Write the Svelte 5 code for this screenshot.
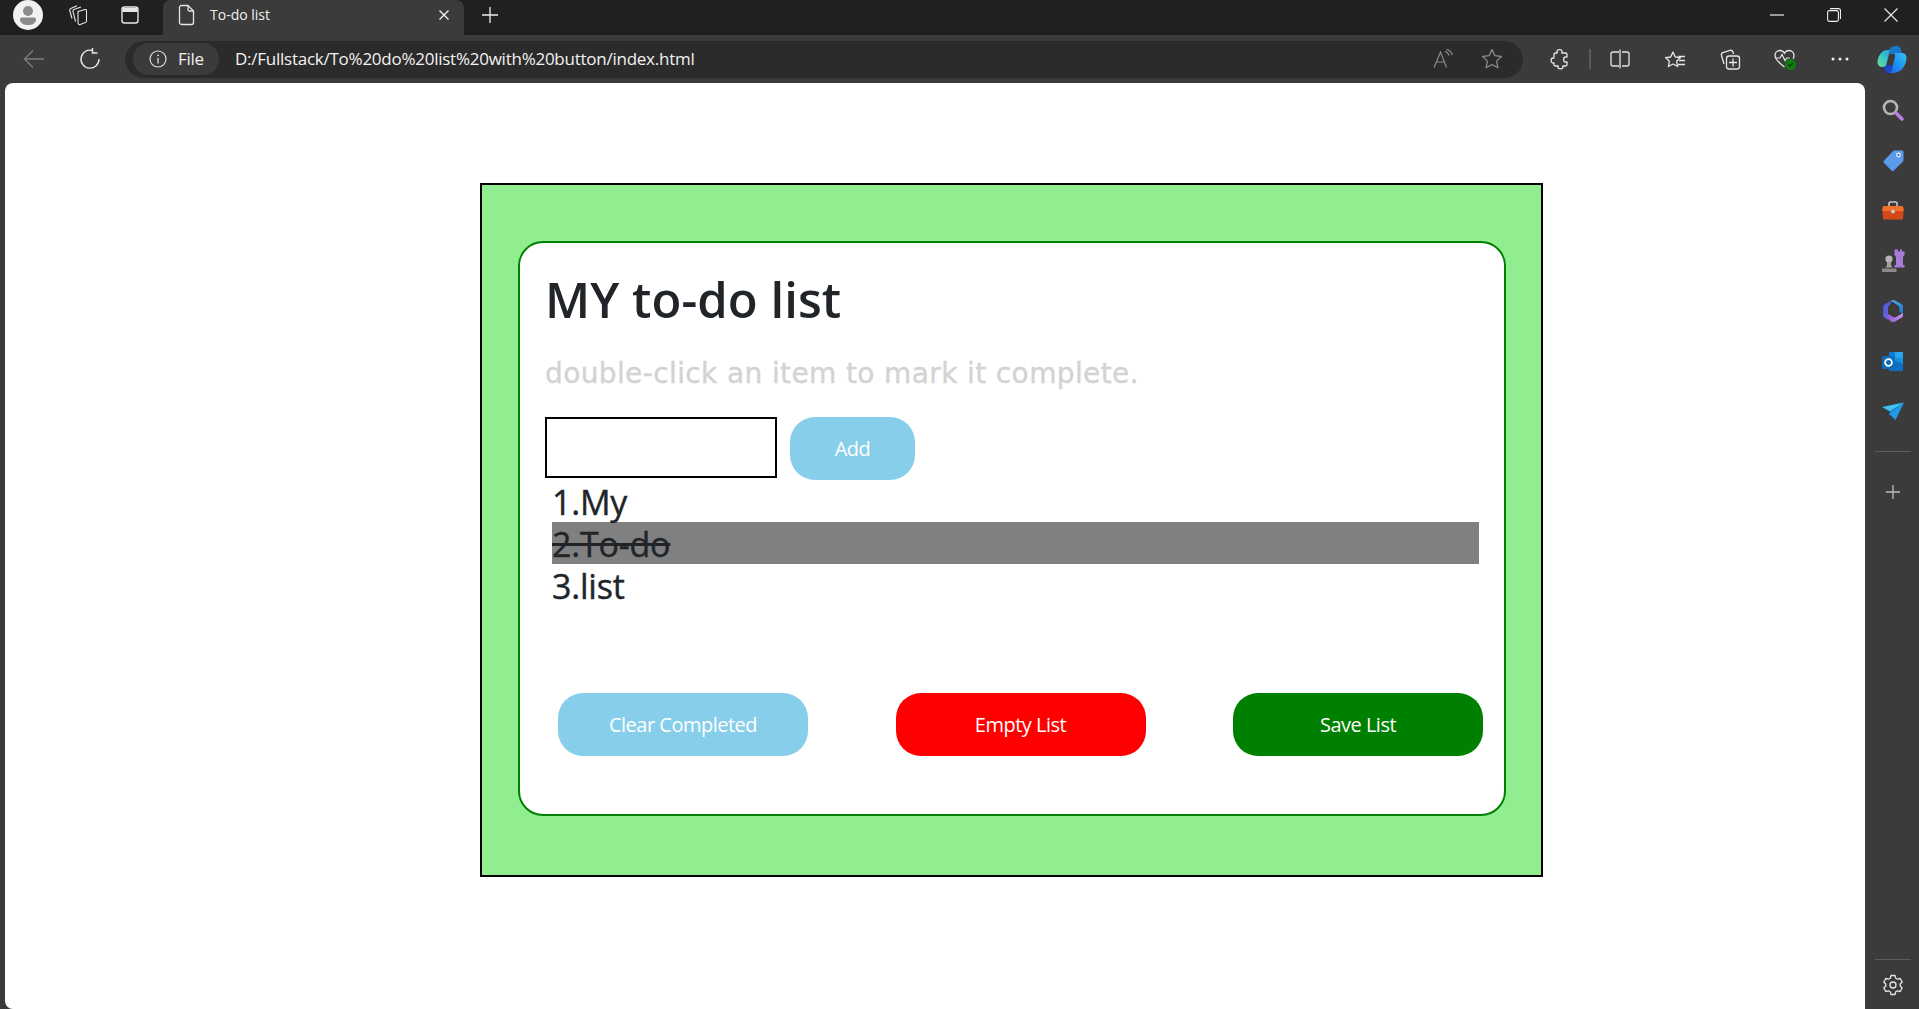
<script>
  let items = [
    { label: '1.My', done: false },
    { label: '2.To-do', done: true },
    { label: '3.list', done: false }
  ];
</script>

<div class="browser">
  <header class="tabbar">
    <div class="slot avatar-slot">
      <svg width="30" height="30" viewBox="0 0 30 30"><circle cx="15" cy="15" r="15" fill="#f2f2f2"/><circle cx="15" cy="11" r="5" fill="#8a8a8a"/><path d="M7 19.500C7 18 8 17.500 9.500 17.500h11c1.500 0 2.500.5 2.500 2 0 3.500-3.500 5.500-8 5.500s-8-2-8-5.500z" fill="#8a8a8a"/></svg>
    </div>
    <div class="slot s44">
      <svg width="22" height="22" viewBox="0 0 22 22" fill="none" stroke="#e6e6e6" stroke-width="1.100"><path d="M11 7.500l7-2c.8-.2 1.500.3 1.500 1.200v10.300c0 .8-.4 1.300-1.100 1.500l-5.200 2c-1 .3-2.200-.3-2.200-1.400z"/><path d="M8.500 17.500 6 7.500c-.2-1 .2-1.700 1-2l7-2.500"/><path d="M5 14.500 2.800 6.500c-.3-1 .2-1.700 1-2L10 1.800"/></svg>
    </div>
    <div class="slot s60">
      <svg width="20" height="20" viewBox="0 0 20 20" fill="none" stroke="#e6e6e6" stroke-width="1.400"><rect x="2" y="2" width="16" height="16" rx="2.500"/><path d="M2.500 3h15v4h-15z" fill="#e6e6e6" stroke="none"/></svg>
    </div>
    <div class="tab">
      <svg class="file" width="18" height="22" viewBox="0 0 18 22" fill="none" stroke="#e6e6e6" stroke-width="1.300"><path d="M3.500 1.500h6.500l5.500 5.500v11.500a2 2 0 0 1-2 2h-10a2 2 0 0 1-2-2v-15a2 2 0 0 1 2-2z"/><path d="M10 1.500v4a1.500 1.500 0 0 0 1.500 1.500h4"/></svg>
      <span class="tab-title">To-do list</span>
      <svg class="tab-close" width="12" height="12" viewBox="0 0 12 12" stroke="#f0f0f0" stroke-width="1.400"><path d="M1.500 1.500l9 9M10.500 1.500l-9 9"/></svg>
    </div>
    <div class="slot newtab">
      <svg width="18" height="18" viewBox="0 0 18 18" stroke="#ededed" stroke-width="1.300"><path d="M9 1v16M1 9h16"/></svg>
    </div>
    <div class="winctl">
      <div class="slot s57"><svg width="14" height="2" viewBox="0 0 14 2"><path d="M0 1h14" stroke="#eee" stroke-width="1.200"/></svg></div>
      <div class="slot s57"><svg width="14" height="14" viewBox="0 0 14 14" fill="none" stroke="#eee" stroke-width="1.100"><rect x=".6" y="2.600" width="10.800" height="10.800" rx="1.800"/><path d="M3 .6h8.500a2 2 0 0 1 2 2V11"/></svg></div>
      <div class="slot s57"><svg width="14" height="14" viewBox="0 0 14 14" stroke="#eee" stroke-width="1.100"><path d="M.5.500l13 13M13.500.500l-13 13"/></svg></div>
    </div>
  </header>

  <nav class="toolbar">
    <div class="slot s56">
      <svg width="22" height="20" viewBox="0 0 22 20" fill="none" stroke="#7d7d7d" stroke-width="1.300"><path d="M21 10H1.500M10 1.500 1.500 10l8.500 8.500"/></svg>
    </div>
    <div class="slot s56">
      <svg width="22" height="22" viewBox="0 0 22 22" fill="none" stroke="#e6e6e6" stroke-width="1.400"><path d="M13.500 2.500A9 9 0 1 0 20 11"/><path d="M13.500 .5v5h5" transform="translate(0 -.5)"/></svg>
    </div>
    <div class="address">
      <div class="pill">
        <svg width="18" height="18" viewBox="0 0 18 18" fill="none" stroke="#e6e6e6" stroke-width="1.100"><circle cx="9" cy="9" r="8"/><path d="M9 8v5.500" stroke-width="1.300"/><circle cx="9" cy="5.300" r=".9" fill="#e6e6e6" stroke="none"/></svg>
        <span>File</span>
      </div>
      <span class="url">D:/Fullstack/To%20do%20list%20with%20button/index.html</span>
      <div class="addr-icons">
        <div class="slot s49">
          <svg width="20" height="20" viewBox="0 0 20 20" fill="none" stroke="#8b8b8b" stroke-width="1.200"><path d="M1 18.500 7.500 3l6 15.500M3.300 13h8.500"/><path d="M12 2.500c2.200.5 3.500 2 4 4M13.500 .5c2.800.7 5 2.800 5.800 5.500" /></svg>
        </div>
        <div class="slot s49">
          <svg width="22" height="22" viewBox="0 0 22 22" fill="none" stroke="#8b8b8b" stroke-width="1.300" stroke-linejoin="round"><path d="M11 1.500l2.900 6.200 6.600.8-4.900 4.600 1.300 6.700L11 16.500l-5.900 3.300 1.300-6.700L1.500 8.500l6.600-.8z"/></svg>
        </div>
      </div>
    </div>
    <div class="tools">
      <div class="slot s55 first">
        <svg width="20" height="22" viewBox="0 0 20 22" fill="none" stroke="#e6e6e6" stroke-width="1.300" stroke-linejoin="round"><path d="M7 3.500C7 1 12 1 12 3.500c0 1-.5 1.500 0 1.500h3.500c1 0 1.500.5 1.500 1.500V9c0 .5-.7 0-1.500 0-2.500 0-2.500 5 0 5 .8 0 1.500-.5 1.500 0v2.500c0 1-.5 1.500-1.500 1.500H13c-.5 0 0 .5 0 1 0 2.500-5 2.500-5 0 0-.5.500-1 0-1H5.500c-1 0-1.500-.5-1.500-1.500V15c0-.5-.5 0-1 0-2.500 0-2.500-5 0-5 .5 0 1 .5 1-.0V6.500C4 5.500 4.500 5 5.500 5H7c.5 0 0-.5 0-1.500z"/></svg>
      </div>
      <div class="sep"></div>
      <div class="slot s55">
        <svg width="20" height="20" viewBox="0 0 20 20" fill="none" stroke="#e6e6e6" stroke-width="1.300"><path d="M9 3H3a2 2 0 0 0-2 2v10a2 2 0 0 0 2 2h6M12 3h5a2 2 0 0 1 2 2v10a2 2 0 0 1-2 2h-5M10 .5v19"/></svg>
      </div>
      <div class="slot s55">
        <svg width="22" height="20" viewBox="0 0 22 20" fill="none" stroke="#e6e6e6" stroke-width="1.300" stroke-linejoin="round"><path d="M9 1.500l2.300 5 5.200.6-3.900 3.600 1 5.300L9 13.500l-4.600 2.500 1-5.300L1.500 7.100l5.200-.6z" transform="translate(0 1.500)"/><path d="M14.500 7.500H21M15 11.500h6M14 15.500h7"/></svg>
      </div>
      <div class="slot s55">
        <svg width="22" height="22" viewBox="0 0 22 22" fill="none" stroke="#e6e6e6" stroke-width="1.300"><path d="M5 16 2.500 7.500C2 6 2.800 5 4 4.600l7-2.200c1.300-.4 2.500.2 3 1.600l.5 2"/><rect x="7.500" y="8" width="13" height="13" rx="2.500"/><path d="M14 10.500v8M10 14.500h8"/></svg>
      </div>
      <div class="slot s55 heart">
        <svg width="24" height="24" viewBox="0 0 24 24" fill="none"><path d="M11.500 20C7 16.500 2 13 2 8.500 2 5.500 4.300 3.500 6.800 3.500c2 0 3.700 1 4.700 2.800 1-1.800 2.700-2.800 4.700-2.800C18.700 3.500 21 5.500 21 8.500c0 1.200-.3 2.300-.8 3.300" stroke="#e6e6e6" stroke-width="1.300"/><path d="M2.500 11h4.500l2-3.500 3 6 1.800-2.500h3" stroke="#e6e6e6" stroke-width="1.200"/><circle cx="17.500" cy="17.500" r="5.500" fill="#107c10"/><path d="M15 17.500l1.800 1.800 3.200-3.400" stroke="#0c3d0c" stroke-width="1.300"/></svg>
      </div>
      <div class="slot s55">
        <svg width="18" height="4" viewBox="0 0 18 4" fill="#f0f0f0"><circle cx="2" cy="2" r="1.500"/><circle cx="9" cy="2" r="1.500"/><circle cx="16" cy="2" r="1.500"/></svg>
      </div>
      <div class="slot copilot">
        <svg width="30" height="29" viewBox="0 0 30 29">
          <defs>
            <linearGradient id="cpa" x1="0" y1="1" x2="1" y2="0"><stop offset="0" stop-color="#6fe08a"/><stop offset=".55" stop-color="#35c4c8"/><stop offset="1" stop-color="#2a9fdc"/></linearGradient>
            <linearGradient id="cpb" x1="0" y1="1" x2="1" y2="0"><stop offset="0" stop-color="#1e5fe0"/><stop offset=".5" stop-color="#1c96f2"/><stop offset="1" stop-color="#3cc0f5"/></linearGradient>
          </defs>
          <path d="M11 7C12.500 3 14.500 1 18 1h2c2 0 3.500 1.500 4 4l1 4H13z" fill="#1878c8"/>
          <path d="M9 28h2c3 0 4.500-1 5.500-4l1-4H6z" fill="#1d45c4"/>
          <path d="M13 5 9.500 19c-.6 2-1.800 3-4 3C2.500 22 .5 20 .5 17c0-5 3-9.500 7-11.500C9 5 11.500 5 13 5z" fill="url(#cpa)"/>
          <path d="M16 8h8.500c3 0 5 1.800 5 4.800 0 5.200-3.500 15.200-13.500 15.200h-5c2 0 3.500-1.500 4-3.500L18 11c.3-1.500-.5-3-2-3z" fill="url(#cpb)"/>
        </svg>
      </div>
    </div>
  </nav>

  <div class="below">
    <main class="page">
      <section class="outer">
        <div class="card">
          <h1>MY to-do list</h1>
          <p class="hint">double-click an item to mark it complete.</p>
          <div class="entry">
            <input type="text" aria-label="New item" />
            <button class="btn sky add">Add</button>
          </div>
          <ul>
            {#each items as item}
              <li class:done={item.done}>{item.label}</li>
            {/each}
          </ul>
          <div class="actions">
            <button class="btn sky">Clear Completed</button>
            <button class="btn red">Empty List</button>
            <button class="btn green">Save List</button>
          </div>
        </div>
      </section>
    </main>

    <aside class="sidebar">
      <div class="side-top">
        <div class="side-item">
          <svg width="24" height="24" viewBox="0 0 24 24" fill="none"><circle cx="9.500" cy="9.500" r="6.500" stroke="#b5b5b5" stroke-width="2.600"/><path d="M15 15l6 6" stroke="#b77fe0" stroke-width="3.600" stroke-linecap="round"/></svg>
        </div>
        <div class="side-item">
          <svg width="24" height="24" viewBox="0 0 24 24"><path d="M13 2.500h8c.8 0 1.500.7 1.500 1.500v8c0 .6-.2 1-.6 1.400l-9 9c-.7.700-1.800.7-2.500 0l-7.300-7.300c-.7-.7-.7-1.800 0-2.500l9-9.600c.3-.3.600-.5.900-.5z" fill="#5a9bec"/><circle cx="17.500" cy="7" r="2.400" fill="#e8eefc"/><circle cx="17.500" cy="7" r="1.100" fill="#33527e"/></svg>
        </div>
        <div class="side-item">
          <svg width="24" height="24" viewBox="0 0 24 24"><path d="M8 7V4.500C8 3.500 8.500 3 9.500 3h5c1 0 1.500.5 1.500 1.500V7" fill="none" stroke="#c8c8c8" stroke-width="1.600"/><path d="M3 7h18c.6 0 1 .4 1.200 1L23 12H1l.8-4c.2-.6.600-1 1.200-1z" fill="#f0702a"/><path d="M1.500 12h21l-.5 7.500c0 .6-.4 1-1 1H3c-.6 0-1-.4-1-1z" fill="#d4491a"/><circle cx="12" cy="12.500" r="2" fill="#c9c9c9"/></svg>
        </div>
        <div class="side-item">
          <svg width="24" height="24" viewBox="0 0 24 24"><path d="M15 .5h2v2h2v-2h2v2h2.500v3.500L22 8v8h-7V8l-1.500-2V.5z" fill="#a77bd8"/><path d="M13.500 16h10v2.500h-10z" fill="#a77bd8"/><circle cx="8" cy="10" r="3.600" fill="#b5b5b5"/><path d="M6 13h4v3l1.500 2.500h-7L6 16z" fill="#a2a2a2"/><path d="M1.500 19.500h13c.5 0 1 .5 1 1V23H1v-2.500c0-.5 0-1 .5-1z" fill="#8a8a8a"/></svg>
        </div>
        <div class="side-item">
          <svg width="22" height="24" viewBox="0 0 22 24">
            <defs>
              <linearGradient id="m1" x1="0" y1="0" x2="1" y2="1"><stop offset="0" stop-color="#2f5fd0"/><stop offset="1" stop-color="#9a5ce0"/></linearGradient>
              <linearGradient id="m2" x1="0" y1="0" x2="1" y2="1"><stop offset="0" stop-color="#3fc0e8"/><stop offset="1" stop-color="#1f6fd0"/></linearGradient>
              <linearGradient id="m3" x1="0" y1="0" x2="1" y2="0"><stop offset="0" stop-color="#8a5cd8"/><stop offset="1" stop-color="#cf90e8"/></linearGradient>
            </defs>
            <path d="M11 1 3 5c-1.500.8-2 2-2 3.500v7c0 1.500.500 2.700 2 3.500l3 1.600V8.500c0-1 .5-1.800 1.300-2.300z" fill="url(#m1)"/>
            <path d="M9 1.500c1.300-.7 2.700-.7 4 0l6 3.200c1.300.7 2 1.800 2 3.300v7l-3.500-2V9c0-1-.5-1.800-1.300-2.200z" fill="url(#m2)"/>
            <path d="M6 15l5 3c1 .6 2 .6 3 0l7-4v2c0 1.300-.7 2.300-2 3l-6 3.500c-1.300.7-2.700.7-4 0L6 20z" fill="url(#m3)"/>
          </svg>
        </div>
        <div class="side-item">
          <svg width="24" height="24" viewBox="0 0 24 24"><path d="M8 2h13c.6 0 1 .4 1 1v17c0 .6-.4 1-1 1H8z" fill="#1490df"/><path d="M14 2h8v6h-8z" fill="#28a8ea"/><path d="M8 2h6v6H8z" fill="#0f78d4"/><path d="M8 14l7-3 7 3v7H8z" fill="#0a5fb0" opacity=".7"/><rect x="1" y="6" width="13" height="13" rx="1.200" fill="#0f6cbd"/><circle cx="7.500" cy="12.500" r="3.400" fill="none" stroke="#fff" stroke-width="1.800"/></svg>
        </div>
        <div class="side-item">
          <svg width="24" height="20" viewBox="0 0 24 20"><path d="M1 5 23 .5 9 9.500z" fill="#3fc4f0"/><path d="M23 .5 9 9.500 8 13l6 1.500z" fill="#1588dc"/><path d="M23 .5 14.500 18l-6-6z" fill="#1f9ce8"/></svg>
        </div>
        <div class="side-sep"></div>
        <div class="side-plus">
          <svg width="16" height="16" viewBox="0 0 16 16" stroke="#bdbdbd" stroke-width="1.300"><path d="M8 1v14M1 8h14"/></svg>
        </div>
      </div>
      <div class="side-bottom">
        <div class="side-sep"></div>
        <div class="side-gear">
          <svg width="22" height="22" viewBox="0 0 22 22" fill="none" stroke="#e6e6e6" stroke-width="1.300" stroke-linejoin="round"><path d="M9 1.500h4l.7 2.700 1.800 1 2.700-.7 2 3.500-2 2v2l2 2-2 3.500-2.700-.7-1.800 1-.7 2.700H9l-.7-2.700-1.800-1-2.700.7-2-3.500 2-2v-2l-2-2 2-3.500 2.700.7 1.800-1z"/><circle cx="11" cy="11" r="3"/></svg>
        </div>
      </div>
    </aside>
  </div>
</div>

<style>
  :global(body) {
    margin: 0;
    overflow: hidden;
    background: #3b3b3b;
  }
  .browser {
    width: 1919px;
    height: 1009px;
    display: flex;
    flex-direction: column;
    font-family: "Open Sans", "Noto Sans", sans-serif;
  }
  .slot {
    display: flex;
    align-items: center;
    justify-content: center;
    flex: none;
  }
  .tabbar {
    height: 35px;
    background: #202020;
    display: flex;
    align-items: flex-start;
    flex: none;
  }
  .tabbar .slot { height: 30px; }
  .avatar-slot { width: 56px; }
  .s44 { width: 44px; }
  .s60 { width: 60px; }
  .s57 { width: 57px; }
  .s56 { width: 56px; }
  .s55 { width: 55px; }
  .s49 { width: 49px; }
  .tab {
    margin-left: 3px;
    width: 301px;
    height: 35px;
    background: #3b3b3b;
    border-radius: 8px 8px 0 0;
    display: flex;
    align-items: center;
    box-sizing: border-box;
    padding: 0 0 5px 15px;
    color: #f0f0f0;
    font-size: 14px;
  }
  .tab-title {
    margin: 0 0 2px 14px;
    flex: 1;
  }
  .tab-close { margin-right: 14px; }
  .newtab { width: 52px; }
  .winctl {
    margin-left: auto;
    display: flex;
  }
  .toolbar {
    height: 48px;
    background: #3b3b3b;
    display: flex;
    align-items: center;
    flex: none;
    padding-left: 6px;
    box-sizing: border-box;
  }
  .address {
    margin-left: 7px;
    width: 1398px;
    height: 37px;
    border-radius: 19px;
    background: #2b2b2b;
    display: flex;
    align-items: center;
    box-sizing: border-box;
    padding-left: 8px;
    flex: none;
  }
  .pill {
    width: 86px;
    height: 32px;
    border-radius: 16px;
    background: #3b3b3b;
    display: flex;
    align-items: center;
    box-sizing: border-box;
    padding: 0 0 1px 16px;
    gap: 11px;
    color: #f0f0f0;
    font-size: 17px;
    letter-spacing: -0.25px;
  }
  .pill svg { margin-top: 1px; }
  .url {
    margin: 0 0 2px 16px;
    color: #f2f2f2;
    font-size: 17px;
    letter-spacing: -0.25px;
    white-space: nowrap;
  }
  .addr-icons {
    margin-left: auto;
    margin-right: 7px;
    display: flex;
  }
  .tools {
    display: flex;
    align-items: center;
    margin-left: 15px;
  }
  .first { width: 44px; margin-right: 7px; }
  .sep {
    width: 2px;
    height: 20px;
    background: #5a5a5a;
    margin-right: 1px;
  }
  .copilot { width: 50px; }
  .below {
    flex: 1;
    display: flex;
    min-height: 0;
  }
  .page {
    flex: none;
    width: 1860px;
    margin-left: 5px;
    background: #fff;
    border-radius: 8px 8px 0 8px;
    box-sizing: border-box;
    padding: 100px 0 0 475px;
  }
  .outer {
    width: 1063px;
    height: 694px;
    box-sizing: border-box;
    border: 2px solid #000;
    background: #90ee90;
    padding: 56px 36px;
  }
  .card {
    width: 988px;
    height: 575px;
    box-sizing: border-box;
    border: 2px solid #008000;
    border-radius: 25px;
    background: #fff;
    padding: 27px 25px 0;
  }
  h1 {
    margin: 0;
    font-size: 49px;
    font-weight: 600;
    line-height: 58px;
    color: #212529;
    letter-spacing: 0.05px;
  }
  .hint {
    margin: 28px 0 0;
    font-family: "DejaVu Sans", sans-serif;
    font-size: 28px;
    line-height: 36px;
    color: #d3d3d3;
    letter-spacing: 0.38px;
    -webkit-text-stroke: 0.4px #d3d3d3;
  }
  .entry {
    margin-top: 25px;
    display: flex;
    align-items: flex-start;
    gap: 13px;
  }
  input {
    width: 232px;
    height: 61px;
    box-sizing: border-box;
    border: 2px solid #000;
    border-radius: 0;
    margin: 0;
    padding: 0;
    background: #fff;
    outline: none;
  }
  .btn {
    width: 250px;
    height: 63px;
    border: none;
    border-radius: 25px;
    color: #fff;
    font-family: inherit;
    font-size: 20px;
    letter-spacing: -0.5px;
    padding: 0;
    flex: none;
  }
  .add {
    width: 125px;
  }
  .sky { background: #87ceeb; }
  .red { background: #ff0000; }
  .green { background: #008000; }
  ul {
    list-style: none;
    margin: 0;
    padding: 0 0 0 7px;
    width: 927px;
  }
  li {
    height: 42px;
    line-height: 44px;
    font-size: 34px;
    color: #212529;
    letter-spacing: -0.2px;
    -webkit-text-stroke: 0.4px #212529;
  }
  li.done {
    background: #808080;
    text-decoration: line-through;
  }
  .actions {
    margin-top: 87px;
    margin-left: 13px;
    width: 925px;
    display: flex;
    justify-content: space-between;
  }
  .sidebar {
    width: 54px;
    flex: none;
    display: flex;
    flex-direction: column;
    justify-content: space-between;
    align-items: center;
  }
  .side-top {
    width: 100%;
    box-sizing: border-box;
    display: flex;
    flex-direction: column;
    align-items: center;
    padding: 2px 0 0 2px;
  }
  .side-item {
    height: 50.300px;
    width: 100%;
    display: flex;
    align-items: center;
    justify-content: center;
  }
  .side-sep {
    width: 36px;
    height: 1px;
    background: #5c5c5c;
    flex: none;
  }
  .side-top .side-sep { margin-top: 14px; }
  .side-plus {
    height: 79px;
    display: flex;
    align-items: center;
  }
  .side-bottom {
    width: 100%;
    box-sizing: border-box;
    padding-left: 2px;
    display: flex;
    flex-direction: column;
    align-items: center;
  }
  .side-gear {
    height: 49px;
    display: flex;
    align-items: center;
  }
</style>
